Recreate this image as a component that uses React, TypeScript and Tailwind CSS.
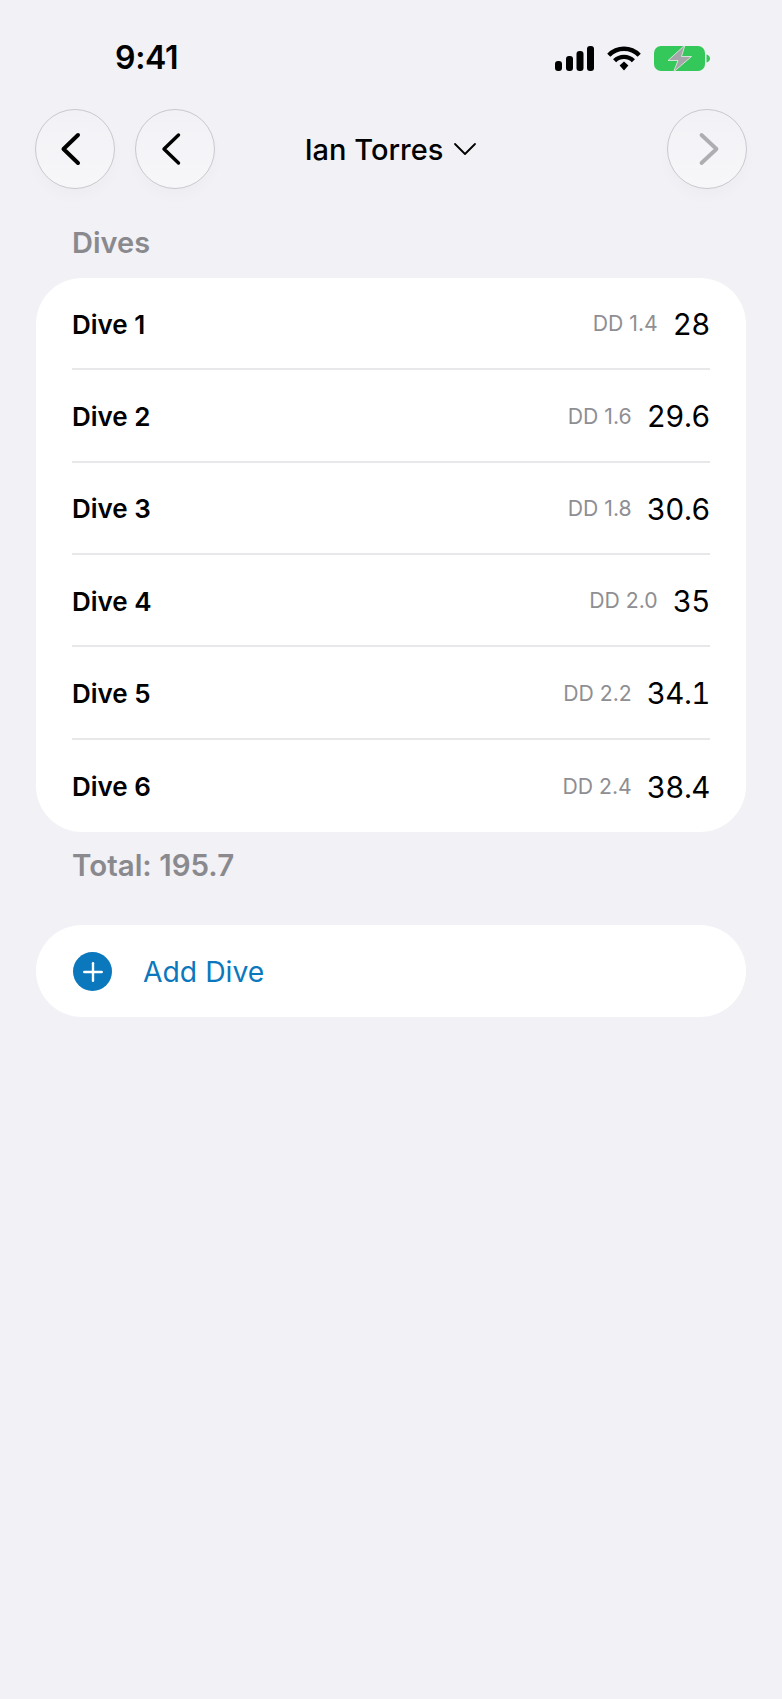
import { Plus } from 'lucide-react';

const dives = [
  { name: 'Dive 1', dd: 'DD 1.4', score: '28' },
  { name: 'Dive 2', dd: 'DD 1.6', score: '29.6' },
  { name: 'Dive 3', dd: 'DD 1.8', score: '30.6' },
  { name: 'Dive 4', dd: 'DD 2.0', score: '35' },
  { name: 'Dive 5', dd: 'DD 2.2', score: '34.1' },
  { name: 'Dive 6', dd: 'DD 2.4', score: '38.4' },
];

function StatusIcons() {
  return (
    <div className="flex items-center">
      {/* signal */}
      <svg width="39" height="25" viewBox="0 0 39 25" fill="#000">
        <rect x="0" y="15" width="7" height="10" rx="3" />
        <rect x="11" y="10" width="7" height="15" rx="3" />
        <rect x="21.5" y="5" width="7" height="20" rx="3" />
        <rect x="32" y="0" width="7" height="25" rx="3" />
      </svg>
      {/* wifi */}
      <svg width="34" height="25" viewBox="0 0 34 25" className="ml-[13px]" fill="none" stroke="#000" strokeWidth="4.4">
        <path d="M1.8 9.2C10.2 .6 23.8 .6 32.2 9.2" />
        <path d="M7.6 14.8C12.8 9.6 21.2 9.6 26.4 14.8" />
        <path d="M12.6 19.4L17 15.6L21.4 19.4L17 24.4Z" fill="#000" stroke="none" />
      </svg>
      {/* battery */}
      <svg width="56" height="27" viewBox="0 0 56 27" className="ml-[13px]">
        <rect x="0" y="1" width="51" height="25" rx="7" fill="#34c759" />
        <path d="M52.500 9.500c2 .4 3.500 2 3.500 4s-1.500 3.600-3.500 4z" fill="#34c759" />
        <path d="M31 0L14 15.500H24L19.500 27L37.500 11.500H27.500Z" fill="#a6a6aa" stroke="#e8f0ea" strokeWidth="0.800" />
      </svg>
    </div>
  );
}

function RoundButton({ path, stroke, width }: { path: string; stroke: string; width: number }) {
  return (
    <button className="flex h-20 w-20 items-center justify-center rounded-full border border-[#c9c9cd] bg-gradient-to-b from-[#f2f2f6] to-[#f7f7fa] shadow-[0_8px_14px_rgba(0,0,0,0.02)]">
      <svg width="40" height="40" viewBox="0 0 40 40" fill="none" stroke={stroke} strokeWidth={width} strokeLinecap="round" strokeLinejoin="round">
        <path d={path} />
      </svg>
    </button>
  );
}

export default function App() {
  return (
    <div className="min-h-screen bg-[#f1f1f6] font-['Inter',sans-serif] text-black">
      {/* Status bar */}
      <div className="flex h-[109px] items-start justify-between pl-[115px] pr-[72px] pt-[38px]">
        <span className="text-[32px] font-semibold leading-10 tracking-[-0.3px]">9:41</span>
        <div className="pt-[7px]">
          <StatusIcons />
        </div>
      </div>

      {/* Nav */}
      <div className="grid h-20 grid-cols-[1fr_auto_1fr] items-center px-[35px]">
        <div className="flex gap-[20px]">
          <RoundButton path="M23 6L8.500 20L23 34" stroke="#000" width={4} />
          <RoundButton path="M23.500 6L9 20L23.500 34" stroke="#000" width={3.4} />
        </div>
        <div className="flex items-center gap-2.5 pt-[2px]">
          <span className="text-[29px] font-medium leading-9">Ian Torres</span>
          <svg width="24" height="14" viewBox="0 0 24 14" fill="none" stroke="#000" strokeWidth="1.800" strokeLinecap="round" strokeLinejoin="round" className="mb-[3px]">
            <path d="M2 2L12 12L22 2" />
          </svg>
        </div>
        <div className="flex justify-end">
          <RoundButton path="M14.500 6L29.500 20L14.500 34" stroke="#aeaeb2" width={3.800} />
        </div>
      </div>

      {/* Dives */}
      <div className="px-9">
        <h2 className="mt-[35px] pl-9 text-[29px] font-semibold leading-[38px] text-[#8a8a8e]">Dives</h2>
        <div className="mt-[16px] rounded-[46px] bg-white px-9">
          {dives.map((dive, i) => (
            <div
              key={dive.name}
              className={`flex h-[92.330px] items-center justify-between pt-[2px] ${i < dives.length - 1 ? 'border-b-2 border-[#e8e8ea]' : ''}`}
            >
              <span className="text-[26px] font-semibold">{dive.name}</span>
              <div className="flex items-center gap-[15px]">
                <span className="text-[21.200px] text-[#8e8e93]">{dive.dd}</span>
                <span className="text-[29.500px] tabular-nums tracking-[-0.5px]">{dive.score}</span>
              </div>
            </div>
          ))}
        </div>
        <p className="mt-[14px] pl-9 text-[29.500px] font-semibold leading-[38px] text-[#8a8a8e]">Total: 195.7</p>

        <button className="mt-[41px] flex h-[92px] w-full items-center rounded-[46px] bg-white pl-[37px] pt-[2px]">
          <span className="flex h-[39px] w-[39px] items-center justify-center rounded-full bg-[#0b78bd] text-white">
            <Plus size={30} strokeWidth={1.900} />
          </span>
          <span className="ml-[31px] text-[28.300px] text-[#0b78bd]">Add Dive</span>
        </button>
      </div>
    </div>
  );
}
